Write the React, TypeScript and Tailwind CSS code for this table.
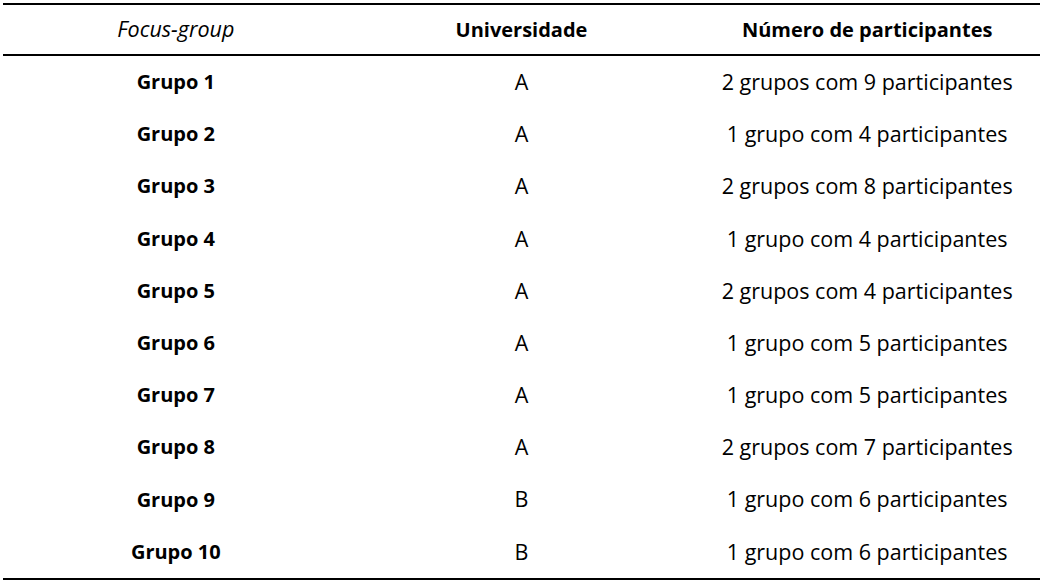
import React from "react";

const rows: [string, string, string][] = [
  ["Grupo 1", "A", "2 grupos com 9 participantes"],
  ["Grupo 2", "A", "1 grupo com 4 participantes"],
  ["Grupo 3", "A", "2 grupos com 8 participantes"],
  ["Grupo 4", "A", "1 grupo com 4 participantes"],
  ["Grupo 5", "A", "2 grupos com 4 participantes"],
  ["Grupo 6", "A", "1 grupo com 5 participantes"],
  ["Grupo 7", "A", "1 grupo com 5 participantes"],
  ["Grupo 8", "A", "2 grupos com 7 participantes"],
  ["Grupo 9", "B", "1 grupo com 6 participantes"],
  ["Grupo 10", "B", "1 grupo com 6 participantes"],
];

export default function App() {
  return (
    <div className="w-[1044px] h-[585px] bg-white pt-[3px] pl-[3px]" style={{ fontFamily: '"Open Sans", "Noto Sans", sans-serif' }}>
      <div className="w-[1037px] border-t-2 border-b-2 border-black text-black text-[20px]">
        <div className="grid grid-cols-3 h-[51px] items-center border-b-2 border-black">
          <div className="text-center italic text-[21.5px]">Focus-group</div>
          <div className="text-center font-bold">Universidade</div>
          <div className="text-center font-bold">Número de participantes</div>
        </div>
        {rows.map((r) => (
          <div key={r[0]} className="grid grid-cols-3 h-[52.2px] items-center">
            <div className="text-center font-bold">{r[0]}</div>
            <div className="text-center text-[21.5px]">{r[1]}</div>
            <div className="text-center text-[21.5px]">{r[2]}</div>
          </div>
        ))}
      </div>
    </div>
  );
}
